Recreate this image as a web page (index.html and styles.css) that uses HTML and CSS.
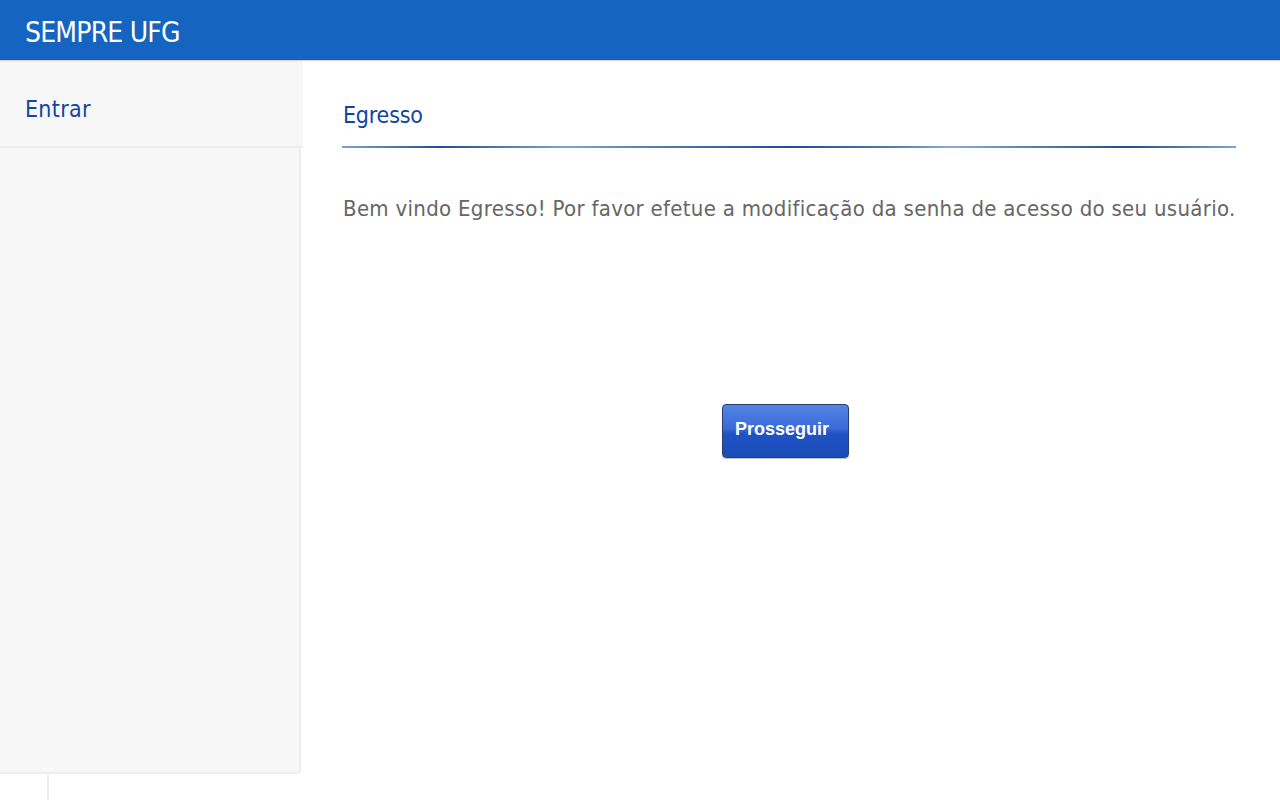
FILE: index.html
```html
<!DOCTYPE html>
<html lang="pt-BR">
<head>
<meta charset="utf-8">
<title>SEMPRE UFG</title>
<link rel="stylesheet" href="styles.css">
</head>
<body>
<header class="topbar">
  <span class="brand">SEMPRE UFG</span>
</header>
<div class="layout">
  <aside class="sidebar-wrap">
    <nav class="sidebar">
      <a class="nav-item" href="#">Entrar</a>
    </nav>
    <div class="sidebar-foot"></div>
  </aside>
  <main class="content">
    <h1 class="title">Egresso</h1>
    <div class="rule"></div>
    <p class="message">Bem vindo Egresso! Por favor efetue a modificação da senha de acesso do seu usuário.</p>
    <div class="actions">
      <button class="btn" type="button">Prosseguir</button>
    </div>
  </main>
</div>
</body>
</html>
```
FILE: styles.css
```css
* { box-sizing: border-box; }
html, body { margin: 0; padding: 0; height: 100%; }
body {
  font-family: "DejaVu Sans Condensed", "DejaVu Sans", Verdana, sans-serif;
  font-stretch: condensed;
  background: #fff;
  overflow: hidden;
}
.topbar {
  height: 60px;
  background: #1565c0;
  padding: 19px 0 0 25px;
  border-bottom: 1px solid #1a5cb0;
  box-shadow: 0 1px 1px rgba(0,0,0,0.15);
  position: relative;
  z-index: 2;
}
.brand {
  display: block;
  color: #fff;
  font-size: 28px;
  line-height: 28px;
  letter-spacing: -0.8px;
}
.layout {
  display: flex;
  height: 740px;
}
.sidebar-wrap {
  width: 302px;
  display: flex;
  flex-direction: column;
}
.sidebar {
  width: 301px;
  height: 714px;
  background: #f7f7f7;
  border-right: 2px solid #eeeeee;
  border-bottom: 2px solid #eeeeee;
  border-bottom-right-radius: 4px;
}
.nav-item {
  display: block;
  width: 303px;
  height: 88px;
  padding: 35px 0 0 25px;
  background: #f7f7f7;
  border-bottom: 2px solid #eeeeee;
  color: #0d47a1;
  font-size: 23px;
  line-height: 28px;
  letter-spacing: 0.3px;
  text-decoration: none;
}
.sidebar-foot {
  flex: 1;
  margin-left: 47px;
  border-left: 2px solid #eeeeee;
}
.content {
  flex: 1;
  padding: 40px 44px 0 40px;
}
.title {
  margin: 0 0 0 1px;
  font-weight: normal;
  font-size: 23px;
  letter-spacing: -0.2px;
  color: #0d47a1;
  line-height: 30px;
}
.rule {
  height: 2px;
  margin-top: 16px;
  background: linear-gradient(to right,
    #7fa2d6 0%, #1f4f9c 11%, #7fa2d6 25%,
    #4f7cc0 35%, #1c4c9c 50%, #4f7cc0 62%,
    #8aaad9 68%, #1e4d9a 88%, #7fa2d6 100%);
}
.message {
  margin: 47px 0 0 1px;
  font-size: 22px;
  letter-spacing: 0.3px;
  color: #666;
  line-height: 28px;
  white-space: nowrap;
}
.actions {
  display: flex;
  justify-content: center;
  margin-top: 181px;
}
.btn {
  width: 127px;
  height: 54px;
  margin-right: 7px;
  border: 1px solid #2b3f6e;
  border-radius: 4px;
  background: linear-gradient(to bottom, #5585e4 0%, #3a6ad8 45%, #1f52c4 55%, #1b4bb8 100%);
  color: #fff;
  font-family: "Liberation Sans", Arial, sans-serif;
  font-stretch: normal;
  font-weight: bold;
  font-size: 18px;
  text-align: left;
  padding: 0 0 3px 12px;
  box-shadow: 0 1px 1px rgba(0,0,0,0.25);
}
```
